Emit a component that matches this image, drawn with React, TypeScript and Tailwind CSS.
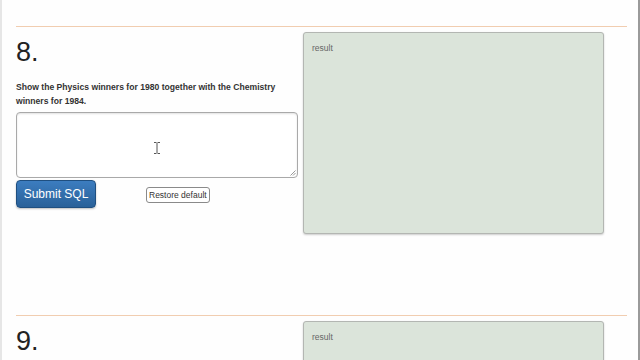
import React from "react";

function Section({ num, question }: { num: string; question?: React.ReactNode }) {
  return (
    <div className="h-[289px] shrink-0">
      <div className="h-px w-[611px] bg-[#f1cdb0]" />
      <div className="flex">
        <div className="w-[282px] shrink-0">
          <div className="mt-[10px] h-[30px] text-[27px] leading-[30px] text-[#222]">{num}</div>
          {question && (
            <>
              <p className="mt-[13px] w-[282px] text-[8.6px] font-bold leading-[14px] text-[#333]">
                {question}
              </p>
              <div className="relative mt-[4px] h-[66px] w-[282px] rounded-[4px] border border-[#a9a9a9] bg-white shadow-[inset_0_1px_2px_rgba(0,0,0,0.12)]">
                <svg
                  className="absolute left-[136px] top-[29px]"
                  width="8"
                  height="12"
                  viewBox="0 0 8 12"
                >
                  <path d="M1 0.5h2.5M4.5 0.5h2.5M4 1v10M1 11.5h2.5M4.5 11.5h2.5" stroke="#555" strokeWidth="1" fill="none" />
                </svg>
                <svg className="absolute bottom-[1px] right-[1px]" width="6" height="6" viewBox="0 0 6 6">
                  <path d="M5.5 0.5L0.5 5.5M5.5 3L3 5.5" stroke="#999" strokeWidth="1" />
                </svg>
              </div>
              <div className="mt-[2px] flex items-start">
                <button className="h-[28px] w-[80px] rounded-[4px] border border-[#1f4f80] bg-gradient-to-b from-[#3c7dc0] to-[#2a6199] text-[12px] text-white shadow-[0_1px_2px_rgba(0,0,0,0.25)]">
                  Submit SQL
                </button>
                <button className="ml-[50px] mt-[7px] h-[16px] rounded-[3px] border border-[#8a8a8a] bg-white px-[2px] text-[8.5px] leading-[14px] text-[#333]">
                  Restore default
                </button>
              </div>
            </>
          )}
        </div>
        <div className="ml-[5px] mt-[5px] h-[202px] w-[301px] shrink-0 rounded-[3px] border border-[#b3b6b2] bg-[#dbe4da] px-[8px] py-[10px] shadow-[0_1px_2px_rgba(0,0,0,0.2)]">
          <div className="text-[8.5px] leading-[10px] text-[#666]">result</div>
        </div>
      </div>
    </div>
  );
}

export default function App() {
  return (
    <div
      className="flex h-[360px] w-[640px] flex-col overflow-hidden border-l-2 border-r-2 border-l-[#e6e6e6] border-r-[#9a9a9a] bg-[#fefefe] pl-[14px] pt-[26px]"
      style={{ fontFamily: '"Liberation Sans", Arial, sans-serif' }}
    >
      <Section
        num="8."
        question="Show the Physics winners for 1980 together with the Chemistry winners for 1984."
      />
      <Section num="9." />
    </div>
  );
}
